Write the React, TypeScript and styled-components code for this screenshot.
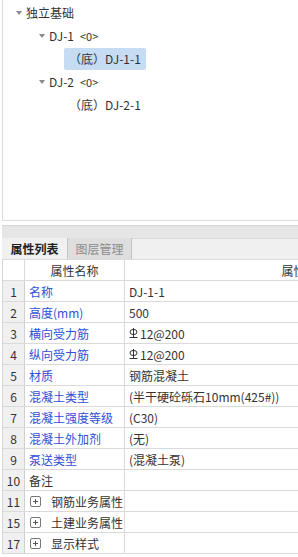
import React from "react";
import styled, { createGlobalStyle } from "styled-components";

const Global = createGlobalStyle`
  html, body { margin: 0; padding: 0; background: #fff; overflow: hidden; }
  body { font-family: "Noto Sans CJK SC", "Noto Sans", sans-serif; font-size: 12px; color: #333; }
`;

const Page = styled.div`
  width: 298px;
  height: 557px;
  overflow: hidden;
  display: flex;
  flex-direction: column;
`;

const TreePanel = styled.div`
  margin-left: 2px;
  height: 221px;
  border-left: 1px solid #dcdcdc;
  border-bottom: 1px solid #dcdcdc;
  padding-top: 1px;
  box-sizing: border-box;
  flex-shrink: 0;
`;

const TreeRow = styled.div<{ $level: number }>`
  height: 23px;
  display: flex;
  align-items: center;
  padding-left: ${(p) => 13 + p.$level * 23}px;
`;

const Caret = styled.span`
  width: 0;
  height: 0;
  border-left: 3px solid transparent;
  border-right: 3px solid transparent;
  border-top: 4px solid #8a8a8a;
  margin-right: 4px;
`;

const Label = styled.span`
  font-size: 12px;
  line-height: 22px;
  height: 22px;
  color: #333;
  white-space: nowrap;
`;

const Small = styled.span`
  font-size: 11px;
  margin-left: 6px;
`;

const LeafLabel = styled.span<{ $selected?: boolean }>`
  font-size: 12px;
  line-height: 22px;
  height: 22px;
  margin-left: 2px;
  padding: 0 5px;
  background: ${(p) => (p.$selected ? "#c6dcf3" : "transparent")};
  border-radius: 2px;
  color: #333;
  white-space: nowrap;
`;

const Gap = styled.div`
  height: 4px;
  flex-shrink: 0;
`;

const GrayBar = styled.div`
  margin-left: 2px;
  height: 12px;
  background: #e6e6e6;
  border-top: 1px solid #d6d6d6;
  flex-shrink: 0;
`;

const TabStrip = styled.div`
  margin-left: 2px;
  height: 22px;
  background: #f0f0f0;
  border-top: 1px solid #d8d8d8;
  border-bottom: 1px solid #dcdcdc;
  display: flex;
  box-sizing: border-box;
  flex-shrink: 0;
`;

const Tab = styled.div<{ $active?: boolean }>`
  width: 65px;
  box-sizing: border-box;
  display: flex;
  align-items: center;
  justify-content: center;
  font-size: 12px;
  font-weight: ${(p) => (p.$active ? 700 : 400)};
  color: ${(p) => (p.$active ? "#222" : "#8c8c8c")};
  background: ${(p) => (p.$active ? "#f0f0f0" : "#dedede")};
  border-left: ${(p) => (p.$active ? "none" : "1px solid #c4c4c4")};
  border-right: ${(p) => (p.$active ? "none" : "1px solid #c4c4c4")};
  margin-top: -1px;
`;

const Table = styled.div`
  margin-left: 2px;
  width: 500px;
  border-left: 1px solid #d6d6d6;
`;

const Row = styled.div`
  display: grid;
  grid-template-columns: 22px 100px 350px;
  height: 21px;
  box-sizing: border-box;
  border-bottom: 1px solid #dadada;
`;

const NumCell = styled.div<{ $head?: boolean }>`
  background: ${(p) => (p.$head ? "#fff" : "#f0f0f0")};
  border-right: 1px solid ${(p) => (p.$head ? "#dadada" : "#d0d0d0")};
  display: flex;
  align-items: center;
  justify-content: center;
  font-size: 12px;
  color: #333;
`;

const HeadCell = styled.div`
  display: flex;
  align-items: center;
  justify-content: center;
  border-right: 1px solid #dadada;
  font-size: 12px;
  color: #333;
`;

const NameCell = styled.div<{ $blue?: boolean }>`
  display: flex;
  align-items: center;
  padding-left: 4px;
  border-right: 1px solid #dadada;
  font-size: 12px;
  color: ${(p) => (p.$blue ? "#2f4fd8" : "#333")};
  white-space: nowrap;
`;

const ValueCell = styled.div`
  display: flex;
  align-items: center;
  padding-left: 4px;
  font-size: 12px;
  color: #333;
  white-space: nowrap;
`;

const PlusBox = styled.span`
  width: 9px;
  height: 9px;
  border: 1px solid #777;
  border-radius: 2px;
  position: relative;
  margin: 0 10px 0 1px;
  flex-shrink: 0;
  &::before, &::after {
    content: "";
    position: absolute;
    background: #555;
  }
  &::before { left: 2px; right: 2px; top: 4px; height: 1px; }
  &::after { top: 2px; bottom: 2px; left: 4px; width: 1px; }
`;

const Rebar = () => (
  <svg width="9" height="12" viewBox="0 0 9 12" style={{ marginRight: 2 }}>
    <ellipse cx="4.5" cy="5" rx="3.5" ry="2.6" fill="none" stroke="#333" strokeWidth="1" />
    <line x1="4.5" y1="1" x2="4.5" y2="10" stroke="#333" strokeWidth="1" />
    <line x1="0.5" y1="10.5" x2="8.5" y2="10.5" stroke="#333" strokeWidth="1" />
  </svg>
);

type Item = { n: string; name: string; value?: React.ReactNode; blue?: boolean; group?: boolean };

const items: Item[] = [
  { n: "1", name: "名称", value: "DJ-1-1", blue: true },
  { n: "2", name: "高度(mm)", value: "500", blue: true },
  { n: "3", name: "横向受力筋", value: <><Rebar />12@200</>, blue: true },
  { n: "4", name: "纵向受力筋", value: <><Rebar />12@200</>, blue: true },
  { n: "5", name: "材质", value: "钢筋混凝土", blue: true },
  { n: "6", name: "混凝土类型", value: "(半干硬砼砾石10mm(425#))", blue: true },
  { n: "7", name: "混凝土强度等级", value: "(C30)", blue: true },
  { n: "8", name: "混凝土外加剂", value: "(无)", blue: true },
  { n: "9", name: "泵送类型", value: "(混凝土泵)", blue: true },
  { n: "10", name: "备注" },
  { n: "11", name: "钢筋业务属性", group: true },
  { n: "15", name: "土建业务属性", group: true },
  { n: "17", name: "显示样式", group: true },
];

export default function App() {
  return (
    <Page>
      <Global />
      <TreePanel>
        <TreeRow $level={0}><Caret /><Label>独立基础</Label></TreeRow>
        <TreeRow $level={1}><Caret /><Label>DJ-1<Small>&lt;0&gt;</Small></Label></TreeRow>
        <TreeRow $level={2}><LeafLabel $selected>（底）DJ-1-1</LeafLabel></TreeRow>
        <TreeRow $level={1}><Caret /><Label>DJ-2<Small>&lt;0&gt;</Small></Label></TreeRow>
        <TreeRow $level={2}><LeafLabel>（底）DJ-2-1</LeafLabel></TreeRow>
      </TreePanel>
      <Gap />
      <GrayBar />
      <TabStrip>
        <Tab $active>属性列表</Tab>
        <Tab>图层管理</Tab>
      </TabStrip>
      <Table>
        <Row>
          <NumCell $head />
          <HeadCell>属性名称</HeadCell>
          <HeadCell>属性值</HeadCell>
        </Row>
        {items.map((it) => (
          <Row key={it.n}>
            <NumCell>{it.n}</NumCell>
            <NameCell $blue={it.blue}>
              {it.group && <PlusBox />}
              {it.name}
            </NameCell>
            <ValueCell>{it.value}</ValueCell>
          </Row>
        ))}
      </Table>
    </Page>
  );
}
